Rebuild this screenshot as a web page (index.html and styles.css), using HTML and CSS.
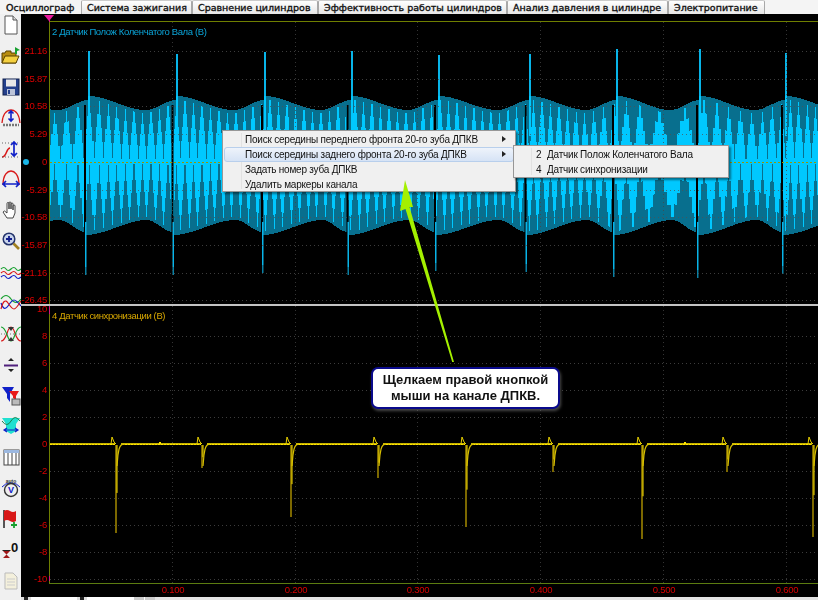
FILE: index.html
```html
<!DOCTYPE html>
<html lang="ru">
<head>
<meta charset="utf-8">
<title>Осциллограф</title>
<link rel="stylesheet" href="styles.css">
</head>
<body>
<div class="app">
  <nav class="tabs">
    <div class="tab tab-active t1">Осциллограф</div>
    <div class="tab t2">Система зажигания</div>
    <div class="tab t3">Сравнение цилиндров</div>
    <div class="tab t4">Эффективность работы цилиндров</div>
    <div class="tab t5">Анализ давления в цилиндре</div>
    <div class="tab t6">Электропитание</div>
  </nav>
  <div class="main">
    <aside class="toolbar">
      <svg class="ico" viewBox="0 0 20 20"><path d="M4 1h8l4 4v14H4z" fill="#fff" stroke="#555"/><path d="M12 1v4h4" fill="#ddd" stroke="#555"/></svg>
      <svg class="ico" viewBox="0 0 20 20"><path d="M1 17V7h3l1-2h5v2h5v10z" fill="#b98d10" stroke="#5a4300"/><path d="M1 17l3-7h14l-3 7z" fill="#f4d040" stroke="#5a4300"/><path d="M14 1l5 3-3 1v3h-2z" fill="#18a030"/></svg>
      <svg class="ico" viewBox="0 0 20 20"><rect x="2" y="2" width="16" height="16" fill="#24408c" stroke="#10204c"/><rect x="5" y="2.500" width="10" height="7" fill="#e8e8e8"/><rect x="6" y="12" width="8" height="6" fill="#bcc4d8"/><rect x="7" y="13" width="2" height="4" fill="#24408c"/></svg>
      <svg class="ico" viewBox="0 0 20 20"><path d="M1 15C2 3 8 2 10 2s8 1 9 13" fill="none" stroke="#d81818" stroke-width="1.300"/><path d="M10 3v10M7.500 5.500L10 3l2.500 2.500M7.500 10.500L10 13l2.500-2.500" fill="none" stroke="#1020c8" stroke-width="1.600"/><path d="M2 17h16" stroke="#777" stroke-width="2.400" stroke-dasharray="2 1"/></svg>
      <svg class="ico" viewBox="0 0 20 20"><path d="M1 18c5 0 4-9 8-9" fill="none" stroke="#d81818" stroke-width="1.400"/><path d="M1 4h18" stroke="#666" stroke-dasharray="1 2"/><path d="M1 18h18" stroke="#666" stroke-dasharray="1 2"/><path d="M13 3v14M10 6l3-3 3 3M10 14l3 3 3-3" fill="none" stroke="#1020c8" stroke-width="1.700"/></svg>
      <svg class="ico sep" viewBox="0 0 20 20"><path d="M2 16C2 5 7 2 10 2s8 3 8 14" fill="none" stroke="#d81818" stroke-width="1.400"/><path d="M2 15h16M5 12l-3 3 3 3M15 12l3 3-3 3" fill="none" stroke="#1020c8" stroke-width="1.700"/></svg>
      <svg class="ico" viewBox="0 0 20 20"><path d="M6 18l-4-6 1.500-1L6 13V3.500a1 1 0 0 1 2 0V9V3a1 1 0 0 1 2 0v6V4a1 1 0 0 1 2 0v6V6a1 1 0 0 1 2 0v7l-2 5z" fill="#fff" stroke="#333" stroke-width=".9"/></svg>
      <svg class="ico sep" viewBox="0 0 20 20"><circle cx="8" cy="8" r="5.800" fill="#c8d4ec" stroke="#24346c" stroke-width="1.500"/><path d="M5 8h6M8 5v6" stroke="#101c8c" stroke-width="1.800"/><path d="M12.500 12.500l5.500 5.500" stroke="#a08020" stroke-width="2.600"/></svg>
      <svg class="ico" viewBox="0 0 20 20"><path d="M0 7q3-3 5 0t5 0 5 0 5 0" fill="none" stroke="#18a030" stroke-width="1.200"/><path d="M0 11q3-3 5 0t5 0 5 0 5 0" fill="none" stroke="#d81818" stroke-width="1.200"/><path d="M0 15q3-3 5 0t5 0 5 0 5 0" fill="none" stroke="#1020c8" stroke-width="1.200"/></svg>
      <svg class="ico" viewBox="0 0 20 20"><path d="M0 6q5-7 10 0t10 0" fill="none" stroke="#18a030" stroke-width="1.200"/><path d="M0 10q3 9 7 3t6-6 7 6" fill="none" stroke="#1020c8" stroke-width="1.200"/><path d="M0 16q3-12 7-6t6 6 7-8" fill="none" stroke="#d81818" stroke-width="1.200"/></svg>
      <svg class="ico" viewBox="0 0 20 20"><path d="M0 17C6 17 6 3 10 3s4 14 10 14" fill="none" stroke="#d81818" stroke-width="1.200"/><path d="M0 3c6 0 6 14 10 14s4-14 10-14" fill="none" stroke="#18a030" stroke-width="1.200"/><path d="M0 10h20" stroke="#777" stroke-dasharray="1 2"/><path d="M7 3h6l-3 4zM7 17h6l-3-4z" fill="#333"/></svg>
      <svg class="ico" viewBox="0 0 20 20"><path d="M3 10.500h14" stroke="#50207c" stroke-width="2"/><path d="M7 6l3-3 3 3zM7 14l3 3 3-3z" fill="#222"/></svg>
      <svg class="ico" viewBox="0 0 20 20"><path d="M1 1h12L9 8v8L6 12V8z" fill="#1020c8"/><path d="M8 5h10l-3 5v4l-3-2v-2z" fill="#e81818"/><rect x="11" y="13" width="8" height="6" fill="#bbb" stroke="#555"/></svg>
      <svg class="ico" viewBox="0 0 20 20"><path d="M1 2h18l-4 6v7l-5 3-5-3V8z" fill="#20e0d0"/><path d="M1 5q5 7 9 0t9 0" fill="none" stroke="#18804c"/><path d="M3 14h14M6 12l-3 2 3 2M14 12l3 2-3 2" fill="none" stroke="#1020c8" stroke-width="1.200"/></svg>
      <svg class="ico" viewBox="0 0 20 20"><rect x="3" y="3" width="15" height="15" fill="#fff" stroke="#444"/><rect x="3" y="3" width="15" height="3" fill="#9cb8e0"/><path d="M7 6v12M11 6v12M15 6v12" stroke="#444"/></svg>
      <svg class="ico" viewBox="0 0 20 20"><text x="10" y="5" class="ico-auto">auto</text><path d="M1 9q3-4 9-4t9 4" fill="none" stroke="#1020c8"/><circle cx="10" cy="12" r="6.500" fill="#eee" stroke="#333" stroke-width="1.400"/><text x="10" y="15" class="ico-v">V</text></svg>
      <svg class="ico" viewBox="0 0 20 20"><path d="M3 1v18" stroke="#222" stroke-width="1.500"/><path d="M3 2q3-2 6 0t6 0v10q-3 2-6 0t-6 0z" fill="#d81818"/><path d="M10 16h6M13 13v6" stroke="#18a030" stroke-width="1.800"/></svg>
      <svg class="ico" viewBox="0 0 20 20"><path d="M2 11h7l-3.500 3.500zM2 18h7l-3.500-3.500z" fill="#a01818"/><path d="M1.500 10.500h8" stroke="#222"/><text x="10" y="11.500" class="ico-zero">0</text></svg>
      <svg class="ico" viewBox="0 0 20 20"><path d="M4 2h8l4 4v12H4z" fill="#f4f0dc" stroke="#bbb"/><path d="M6 8h8M6 11h8M6 14h8" stroke="#ccc"/></svg>
    </aside>
    <section class="chart" id="chart">
      <canvas id="scope" class="scope" width="797" height="583"></canvas>
      <span class="dot"></span>
      <span class="marker"></span>
      <div class="ch-title ch-title-a">2 Датчик Полож Коленчатого Вала (В)</div>
      <div class="ch-title ch-title-b">4 Датчик синхронизации (В)</div>
    </section>
  </div>
  <footer class="status">
    <span class="sb sb-btn"></span><span class="sb sb-field"></span><span class="sb sb-btn"></span><span class="sb sb-field"></span><span class="sb sb-btn sb-plain"></span><span class="sb sb-btn sb-plain"></span><span class="sb-rest"></span>
  </footer>

  <div class="menu menu-main">
    <div class="mi">Поиск середины переднего фронта 20-го зуба ДПКВ<i class="sub"></i></div>
    <div class="mi mi-on">Поиск середины заднего фронта 20-го зуба ДПКВ<i class="sub"></i></div>
    <div class="mi">Задать номер зуба ДПКВ</div>
    <div class="mi">Удалить маркеры канала</div>
  </div>
  <div class="menu menu-sub">
    <div class="mi"><b class="num">2</b>Датчик Полож Коленчатого Вала</div>
    <div class="mi"><b class="num">4</b>Датчик синхронизации</div>
  </div>
  <svg class="pointer" viewBox="0 0 818 600" width="818" height="600"><polygon points="405,180 413,207 409.500,207 454,362 452.200,362 405.500,209 400,211" fill="#a4f000"/></svg>
  <div class="callout">Щелкаем правой кнопкой<br>мыши на канале ДПКВ.</div>
</div>
<script src="app.js"></script>
</body>
</html>
```
FILE: styles.css
```css
* { box-sizing: border-box; }
html, body { margin: 0; height: 100%; overflow: hidden; background: #f0f0f0; }
.app { position: relative; width: 818px; height: 600px; display: flex; flex-direction: column; font-family: "Liberation Sans", Arial, sans-serif; }

.tabs { height: 14px; display: flex; background: #f4f4f4; flex: none; }
.tab { height: 14px; padding: 0 0 0 5px; font: 9.500px/13px "DejaVu Sans", sans-serif; color: #111; -webkit-text-stroke: .35px #111; background: linear-gradient(#fff, #e6e6e6); border: 1px solid #a8a8a8; border-bottom: 0; border-top-color: #ccc; border-radius: 2px 2px 0 0; white-space: nowrap; }
.tab-active { background: #f4f4f4; border-color: #f4f4f4; }
.t1 { width: 81px; }
.t2 { width: 111px; }
.t3 { width: 126px; }
.t4 { width: 189px; }
.t5 { width: 161px; }
.t6 { width: 97px; }

.main { flex: 1; display: flex; min-height: 0; }
.toolbar { width: 21px; flex: none; padding: 1px 0 6px; display: flex; flex-direction: column; justify-content: space-between; align-items: center; background: #f0f0f0; }
.ico { width: 20px; height: 20px; display: block; flex: none; overflow: visible; }
.ico-auto { font: 700 5px "Liberation Sans", sans-serif; fill: #333; text-anchor: middle; }
.ico-v { font: 700 9px "Liberation Sans", sans-serif; fill: #1020c8; text-anchor: middle; }
.ico-zero { font: 700 13px "Liberation Sans", sans-serif; fill: #111; }

.chart { position: relative; flex: 1; background: #000; overflow: hidden; }
.scope { position: absolute; left: 0; top: 0; display: block; }
.dot { position: absolute; left: 2px; top: 145px; width: 6px; height: 6px; border-radius: 50%; background: #19b6e8; }
.marker { position: absolute; left: 23px; top: 1px; width: 10px; height: 6px; background: #e8189c; clip-path: polygon(0 0, 100% 0, 50% 100%); }
.ch-title { position: absolute; left: 31px; font-size: 9.500px; line-height: 12px; white-space: nowrap; letter-spacing: -.38px; }
.ch-title-a { top: 12px; color: #0aa4d8; }
.ch-title-b { top: 296px; color: #d8a800; }
.ax { position: absolute; color: #dc0000; font-size: 9.500px; line-height: 12px; white-space: nowrap; letter-spacing: -.25px; }
.ax-y { right: calc(100% - 26px); }
.ax-x { transform: translateX(-50%); top: 570px; }

.status { height: 3px; flex: none; display: flex; padding-left: 21px; background: #f0f0f0; overflow: hidden; }
.sb { display: block; height: 3px; }
.sb-btn { width: 10px; background: linear-gradient(90deg, #ddd 0 30%, #222 30% 70%, #ddd 70%); }
.sb-plain { background: #ccc; border-left: 1px solid #fff; width: 11px; }
.sb-field { width: 46px; background: #fff; }
.sb-rest { flex: 1; background: #e4e4e4; }

.pointer { position: absolute; left: 0; top: 0; pointer-events: none; }
.menu { position: absolute; background: #f0f0f0; border: 1px solid #979797; box-shadow: 2px 2px 2px rgba(0,0,0,.45); padding: 1px; color: #111; font-size: 10px; letter-spacing: -.22px; }
.menu::before { content: ""; position: absolute; top: 2px; bottom: 2px; width: 1px; background: #e2e2e2; }
.menu-main { left: 222px; top: 130px; width: 294px; height: 62px; }
.menu-main::before { left: 18px; }
.menu-sub { left: 513px; top: 145px; width: 216px; height: 33px; }
.menu-sub::before { left: 17px; }
.mi { position: relative; height: 15px; line-height: 14px; white-space: nowrap; border: 1px solid transparent; padding-left: 20px; }
.mi-on { background: linear-gradient(#eef3fb, #d6e3f5); border-color: #b8cfec; border-radius: 3px; }
.num { display: inline-block; width: 11px; font-weight: 400; }
.sub { position: absolute; right: 7px; top: 3px; border-left: 4px solid #222; border-top: 3px solid transparent; border-bottom: 3px solid transparent; }
.callout { position: absolute; left: 371px; top: 367px; width: 189px; height: 42px; background: #fff; border: 2px solid #0a0a8c; border-radius: 7px; box-shadow: 1px 2px 3px rgba(120,120,120,.6); color: #111; font-weight: 700; font-size: 13px; line-height: 16px; text-align: center; padding-top: 3px; }
```
FILE: app.js
```js
(function () {
  var OX = 21, OY = 14;
  var chart = document.getElementById('chart');
  var c = document.getElementById('scope').getContext('2d');
  c.translate(-OX, -OY);
  c.fillStyle = '#000';
  c.fillRect(OX, OY, 797, 583);

  var UP = [88, 176, 264, 351, 438, 529, 616, 699, 785];
  var UPTOP = [51, 54, 52, 51, 55, 54, 49, 49, 53];
  var DN = [85, 172.5, 262, 347.5, 435, 525.5, 613, 697, 782];
  var DNEND = [275, 275, 273, 275, 271, 272, 277, 278, 274];
  var PER = 87.5;

  function s(t) { t = Math.max(0, Math.min(1, t)); return t * t * (3 - 2 * t); }
  function frac(x, list) {
    var p = list[0] - PER, n = list[0];
    for (var i = 0; i < list.length; i++) {
      if (x >= list[i]) { p = list[i]; n = list[i + 1] || p + PER; }
    }
    return (x - p) / (n - p);
  }
  function topEnv(x) {
    var t = frac(x, UP);
    return t < 0.65 ? 96 + 14 * s(t / 0.65) : 110 - 10 * s((t - 0.65) / 0.35);
  }
  function botEnv(x) {
    var t = frac(x, DN);
    return t < 0.7 ? 235 - 15 * s(t / 0.7) : 220 + 12 * s((t - 0.7) / 0.3);
  }
  function bump(x, m, w) { var d = (x - m) / w; return Math.exp(-d * d); }
  function tri(p) { var f = p - Math.floor(p); return 1 - Math.abs(2 * f - 1); }

  // channel 2: sampled crank sensor
  var phase = 0;
  for (var x = 50; x < 818; x++) {
    var period = 8.5 + 3.5 * bump(x, 70, 25) + 2.5 * bump(x, 620, 25) + 18 * bump(x, 672, 30) + 3 * bump(x, 740, 30);
    phase += 1 / period;
    var yT = Math.round(topEnv(x));
    var yB = Math.round(botEnv(x));
    c.fillStyle = '#086f8e';
    c.fillRect(x, yT, 1, yB - yT);
    var step = Math.round(phase * 8) / 8;
    var a = Math.pow(tri(step), 0.9);
    var b = Math.pow(tri(step + 0.5), 0.9);
    var up = (162 - yT) * (0.06 + 0.88 * a);
    var dn = (yB - 162) * (0.04 + 0.9 * b);
    c.fillStyle = '#00c8ff';
    c.fillRect(x, Math.round(162 - up), 1, Math.round(up + dn));
  }
  UP.forEach(function (x, i) {
    var yT = topEnv(x + 2);
    c.fillStyle = '#08b4e8';
    c.fillRect(x, UPTOP[i], 2, yT - UPTOP[i] + 4);
    c.fillStyle = '#00c8ff';
    c.fillRect(x, yT, 2, 40);
  });
  DN.forEach(function (x, i) {
    var yB = botEnv(x - 1);
    c.fillStyle = '#000';
    c.fillRect(x - 1, 105, 2, yB - 105 + 1);
    c.fillStyle = '#08b4e8';
    c.fillRect(x, yB - 10, 1.5, DNEND[i] - yB + 10 - 8);
    c.fillStyle = '#0a80a4';
    c.fillRect(x, DNEND[i] - 8, 1.5, 8);
  });

  // grid
  function hdots(y, x0) {
    c.fillStyle = 'rgba(80,80,80,.75)';
    for (var x = x0; x < 818; x += 4) c.fillRect(x, y, 1, 1);
  }
  var GX = [172, 295, 417, 540, 663, 786];
  GX.forEach(function (x) {
    c.fillStyle = 'rgba(70,70,70,.75)';
    for (var y = 22; y < 583; y += 4) c.fillRect(x, y, 1, 1);
  });
  var YA = [[51, '21.16'], [79, '15.87'], [106, '10.58'], [134, '5.29'], [162, '0'], [190, '-5.29'], [217, '-10.58'], [245, '-15.87'], [273, '-21.16'], [300, '-26.45']];
  var YB = [[309, '10'], [336, '8'], [363, '6'], [390, '4'], [417, '2'], [444, '0'], [471, '-2'], [498, '-4'], [525, '-6'], [552, '-8'], [579, '-10']];
  YA.concat(YB).forEach(function (r) { if (r[0] !== 162 && r[0] !== 309) hdots(r[0], 50); });
  c.fillStyle = '#989800';
  for (var zx = 50; zx < 818; zx += 4) c.fillRect(zx, 162, 2, 1);

  // axes
  c.fillStyle = '#6f7f00';
  c.fillRect(49, 21, 769, 1);
  c.fillRect(49, 21, 1, 562);
  c.fillStyle = '#5c7c10';
  c.fillRect(49, 583, 769, 1);
  c.fillStyle = '#c4c4c4';
  c.fillRect(21, 304, 797, 2);
  c.fillStyle = '#d01880';
  c.fillRect(49, 306, 1, 8);
  c.fillRect(49, 576, 1, 5);
  c.fillRect(49, 16, 1, 6);

  // channel 4: sync sensor
  var YE = [[116, 533], [202, 468], [291, 517], [378, 478], [466, 527], [553, 472], [642, 539], [727, 472], [813, 537]];
  c.fillStyle = '#c8b400';
  c.fillRect(50, 443, 768, 2);
  c.fillStyle = '#ffe400';
  for (var bx = 50; bx < 818; bx += 3) c.fillRect(bx, 444, 2, 1);
  c.fillRect(159, 442, 2, 2);
  c.fillRect(684, 442, 2, 2);
  YE.forEach(function (e) {
    var x = e[0], d = e[1];
    c.fillStyle = '#000';
    c.fillRect(x - 1, 443, 6, 2);
    c.strokeStyle = '#e8d000';
    c.lineWidth = 1;
    c.beginPath();
    c.moveTo(x - 5, 444); c.lineTo(x - 4, 437); c.lineTo(x - 2, 442); c.lineTo(x, 444);
    c.stroke();
    c.strokeStyle = '#7c6800';
    c.lineWidth = 2;
    c.beginPath(); c.moveTo(x, 445); c.lineTo(x, d); c.stroke();
    c.strokeStyle = '#ffe400';
    c.lineWidth = 1;
    c.beginPath(); c.moveTo(x + 1, 445); c.lineTo(x + 1, 444 + (d - 444) * 0.55); c.stroke();
    c.strokeStyle = '#d8c000';
    c.lineWidth = 1.2;
    c.beginPath();
    for (var k = 0; k <= 7; k++) {
      var yy = 444 + 22 * Math.exp(-k / 1.4);
      if (k === 0) c.moveTo(x + 1 + k, yy); else c.lineTo(x + 1 + k, yy);
    }
    c.stroke();
  });

  // axis text
  function label(cls, text, left, top) {
    var el = document.createElement('span');
    el.className = 'ax ' + cls;
    el.textContent = text;
    if (left !== null) el.style.left = (left - OX) + 'px';
    if (top !== null) el.style.top = (top - OY - 6) + 'px';
    chart.appendChild(el);
  }
  YA.concat(YB).forEach(function (r) { label('ax-y', r[1], null, r[0]); });
  ['0.100', '0.200', '0.300', '0.400', '0.500', '0.600'].forEach(function (t, i) { label('ax-x', t, GX[i] + 1, null); });
})();
```
